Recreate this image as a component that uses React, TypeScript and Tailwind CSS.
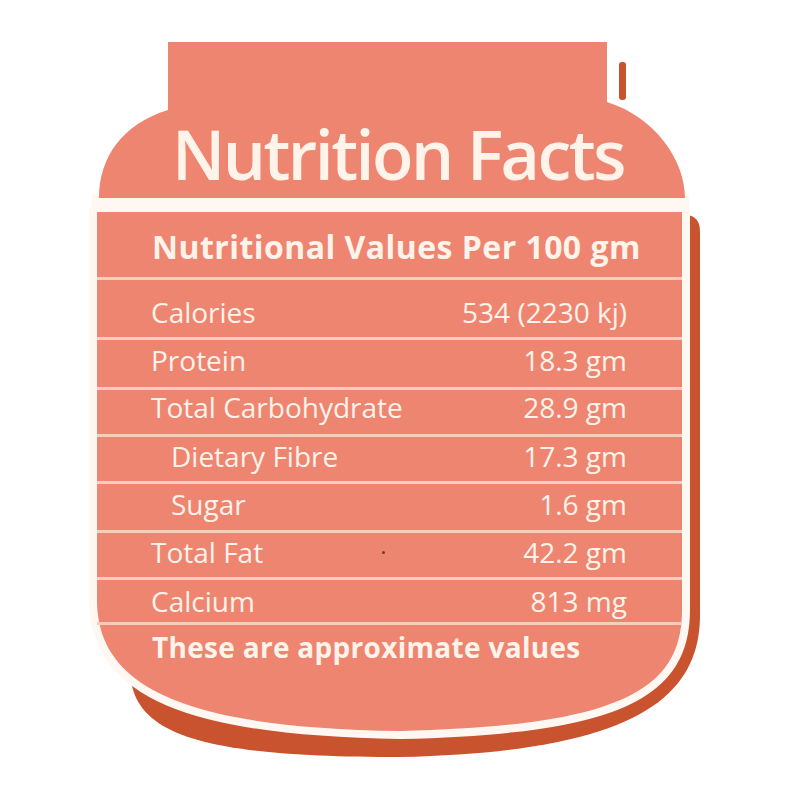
import React from "react";

const rows: { label: string; value: string; indent?: boolean; cls: string }[] = [
  { label: "Calories", value: "534 (2230 kj)", cls: "h-[60px] pt-[18px]" },
  { label: "Protein", value: "18.3 gm", cls: "h-[50px] pt-[6px]" },
  { label: "Total Carbohydrate", value: "28.9 gm", cls: "h-[47px] pt-[3px]" },
  { label: "Dietary Fibre", value: "17.3 gm", indent: true, cls: "h-[47px] pt-[5px]" },
  { label: "Sugar", value: "1.6 gm", indent: true, cls: "h-[49px] pt-[6px]" },
  { label: "Total Fat", value: "42.2 gm", cls: "h-[47px] pt-[5px]" },
  { label: "Calcium", value: "813 mg", cls: "h-[45px] pt-[7px]" },
];

function Jar() {
  return (
    <svg className="absolute inset-0" width="800" height="800" viewBox="0 0 800 800">
      {/* shadow */}
      <rect x="619" y="62" width="7" height="38" rx="3" fill="#C9532F" />
      <path
        d="M130,215 H685 Q700,215 700,232 V615 C700,700 630,752 400,757 C200,757 130,735 130,668 Z"
        fill="#C9532F"
      />
      {/* cream outline */}
      <rect x="92" y="194" width="597" height="22" fill="#FFF7F1" />
      <path
        d="M97,212 H682 V610 C682,690 620,726 400,731 C190,728 97,690 97,600 Z"
        fill="#FFF7F1"
        stroke="#FFF7F1"
        strokeWidth="16"
        strokeLinejoin="round"
      />
      {/* salmon shapes */}
      <path
        d="M168,42 H607 V102 C655,117 685,160 685,198 H99 C99,158 122,124 168,110 Z"
        fill="#EE8571"
      />
      <path
        d="M97,212 H682 V610 C682,690 620,726 400,731 C190,728 97,690 97,600 Z"
        fill="#EE8571"
      />
    </svg>
  );
}

export default function App() {
  return (
    <div
      className="relative w-[800px] h-[800px] bg-white overflow-hidden text-[#FFF3EA]"
      style={{ fontFamily: '"Open Sans", "Noto Sans", sans-serif' }}
    >
      <Jar />
      <div className="relative flex flex-col">
        <div className="h-[212px] pt-[114px] pl-[172px]">
          <h1 className="text-[68px] leading-[80px] font-semibold tracking-[-2.5px] whitespace-nowrap">
            Nutrition Facts
          </h1>
        </div>
        <div className="ml-[97px] w-[585px] flex flex-col">
          <div className="h-[68px] box-border pt-[19px] pl-[55px] border-b-[3px] border-[#F9CDBD]">
            <div className="text-[32px] leading-[32px] font-bold tracking-[0.45px] whitespace-nowrap">
              Nutritional Values Per 100 gm
            </div>
          </div>
          {rows.map((r) => (
            <div
              key={r.label}
              className={`${r.cls} box-border flex items-start justify-between pr-[55px] border-b-[3px] border-[#F9CDBD] ${
                r.indent ? "pl-[74px]" : "pl-[54px]"
              }`}
            >
              <span className="text-[28px] leading-[28px] whitespace-nowrap">{r.label}</span>
              <span className="text-[28px] leading-[28px] whitespace-nowrap">{r.value}</span>
            </div>
          ))}
          <div className="pl-[55px] pt-[8px]">
            <div className="text-[28px] leading-[28px] font-bold tracking-[0.3px] whitespace-nowrap">
              These are approximate values
            </div>
          </div>
        </div>
      </div>
      <span className="absolute left-[382px] top-[551px] w-[3px] h-[3px] rounded-full bg-[#7a3a2a]" />
    </div>
  );
}
